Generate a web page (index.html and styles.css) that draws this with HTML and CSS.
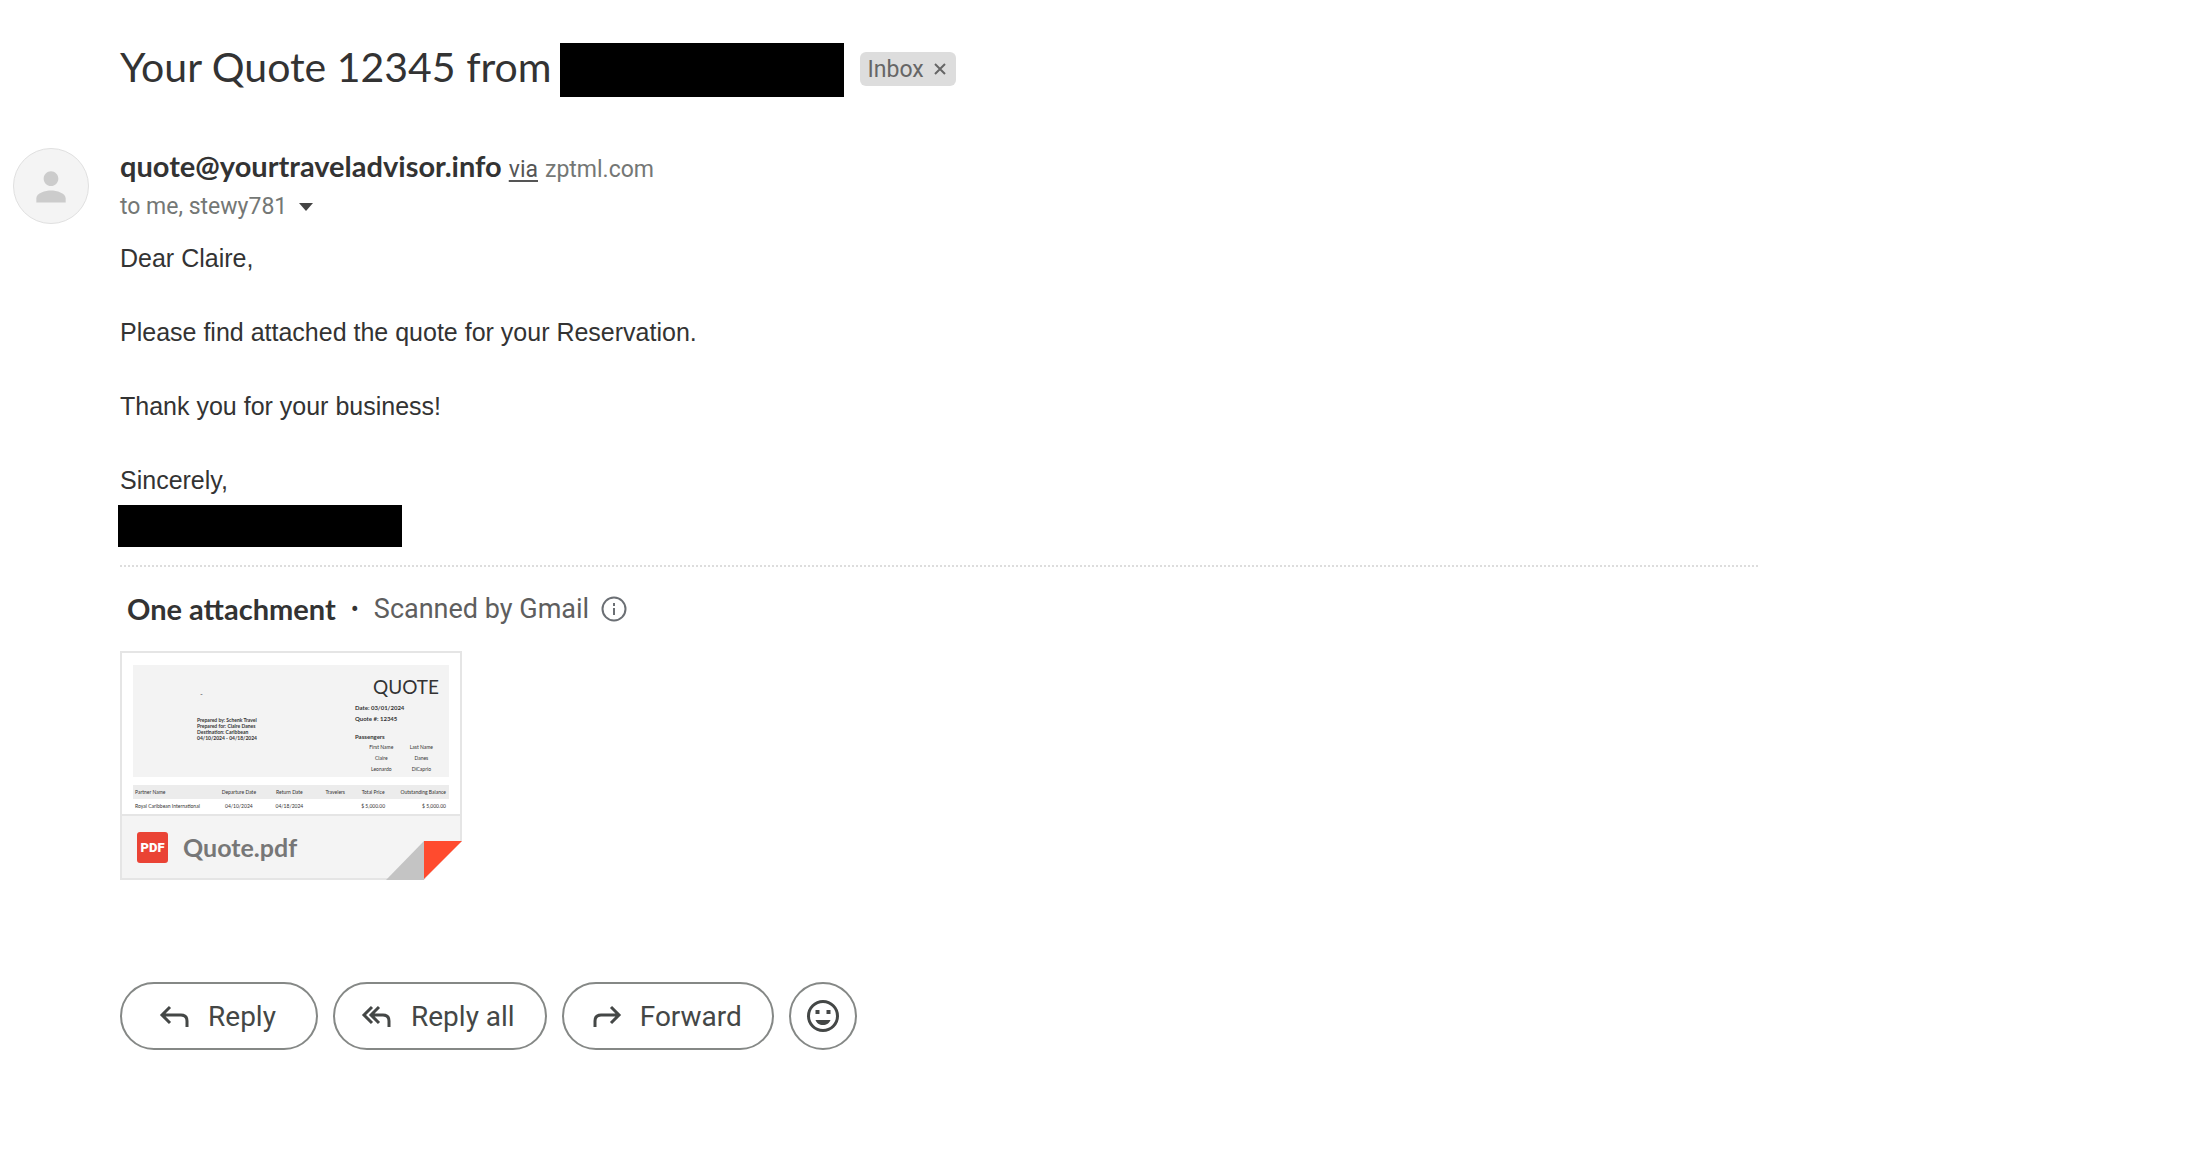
FILE: index.html
```html
<!DOCTYPE html>
<html lang="en">

<head>
    <meta charset="UTF-8">
    <meta name="viewport" content="width=device-width, initial-scale=1.0">
    <title>Your Quote 12345</title>
    <link rel="stylesheet" href="styles.css">
</head>

<body>
    <header class="subject">
        <h1>Your Quote 12345 from</h1>
        <span class="redacted redacted-title"></span>
        <span class="label">Inbox
            <button class="label-remove" aria-label="Remove label">
                <svg width="12" height="12" viewBox="0 0 12 12"><path d="M1 1l10 10M11 1L1 11" /></svg>
            </button>
        </span>
    </header>

    <main class="message">
        <div class="avatar">
            <svg width="44" height="44" viewBox="0 0 24 24"><path d="M12 12c2.200 0 4-1.800 4-4s-1.800-4-4-4-4 1.800-4 4 1.800 4 4 4zm0 2.500c-3 0-8 1.400-8 4.200V21h16v-2.300c0-2.800-5-4.200-8-4.200z" /></svg>
        </div>
        <div class="content">
            <div class="sender">
                <strong>quote@yourtraveladvisor.info</strong>
                <a href="#">via</a>
                <span>zptml.com</span>
            </div>
            <div class="recipients">
                <span>to me, stewy781</span>
                <button class="details" aria-label="Show details"></button>
            </div>

            <div class="body">
                <p>Dear Claire,</p>
                <p>Please find attached the quote for your Reservation.</p>
                <p>Thank you for your business!</p>
                <p>Sincerely,</p>
                <span class="redacted redacted-name"></span>
            </div>

            <section class="attachments">
                <div class="attachments-head">
                    <strong>One attachment</strong>
                    <span class="dot">•</span>
                    <span>Scanned by Gmail</span>
                    <svg width="26" height="26" viewBox="0 0 26 26"><circle cx="13" cy="13" r="11.500" /><path d="M13 12v7M13 7v3" /></svg>
                </div>

                <a class="card" href="#">
                    <div class="preview">
                        <div class="doc-head">
                            <div class="prepared">
                                <i>–</i>
                                <b>Prepared by: Schenk Travel</b>
                                <b>Prepared for: Claire Danes</b>
                                <b>Destination: Caribbean</b>
                                <b>04/10/2024 - 04/18/2024</b>
                            </div>
                            <div class="quote-info">
                                <h2>QUOTE</h2>
                                <b>Date: 03/01/2024</b>
                                <b>Quote #: 12345</b>
                                <b class="passengers-title">Passengers</b>
                                <table class="passengers">
                                    <tr><th>First Name</th><th>Last Name</th></tr>
                                    <tr><td>Claire</td><td>Danes</td></tr>
                                    <tr><td>Leonardo</td><td>DiCaprio</td></tr>
                                </table>
                            </div>
                        </div>
                        <table class="items">
                            <colgroup>
                                <col class="col-partner">
                                <col class="col-departure">
                                <col class="col-return">
                                <col class="col-small">
                                <col class="col-small">
                                <col>
                            </colgroup>
                            <tr>
                                <th>Partner Name</th>
                                <th>Departure Date</th>
                                <th>Return Date</th>
                                <th>Travelers</th>
                                <th>Total Price</th>
                                <th>Outstanding Balance</th>
                            </tr>
                            <tr>
                                <td>Royal Caribbean International</td>
                                <td>04/10/2024</td>
                                <td>04/18/2024</td>
                                <td></td>
                                <td>$ 5,000.00</td>
                                <td>$ 5,000.00</td>
                            </tr>
                        </table>
                    </div>
                    <div class="card-foot">
                        <span class="pdf">PDF</span>
                        <span>Quote.pdf</span>
                    </div>
                    <svg class="fold" width="76" height="39" viewBox="0 0 76 39">
                        <path fill="#fff" d="M76 0v39H38z" />
                        <path fill="#c4c4c4" d="M38 0v39H0z" />
                        <path fill="#ff4b2e" d="M38 0h38L38 38z" />
                    </svg>
                </a>
            </section>

            <div class="actions">
                <button>
                    <svg width="36" height="28" viewBox="0 0 36 28"><path d="M13 5l-8 8 8 8M5 13h19q6 0 6 6v6" /></svg>
                    Reply
                </button>
                <button>
                    <svg width="36" height="28" viewBox="0 0 36 28"><path d="M12 5l-8 8 8 8M19 5l-8 8 8 8M11 13h12q6 0 6 6v6" /></svg>
                    Reply all
                </button>
                <button>
                    <svg width="36" height="28" viewBox="0 0 36 28"><path d="M22 5l8 8-8 8M30 13H12q-6 0-6 6v6" /></svg>
                    Forward
                </button>
                <button class="emoji" aria-label="Add reaction">
                    <svg width="34" height="34" viewBox="0 0 34 34">
                        <circle cx="17" cy="17" r="14.500" />
                        <path class="solid" d="M9.500 11h4v4h-4zM20.500 11h4v4h-4zM9.500 21h15c-1 3-4 5-7.500 5s-6.500-2-7.500-5z" />
                    </svg>
                </button>
            </div>
        </div>
    </main>
</body>

</html>
```
FILE: styles.css
```css
* {
    box-sizing: border-box;
}

body {
    margin: 0;
    padding: 43px 13px;
    background-color: #fff;
    color: #333;
    font-family: Roboto, Arial, sans-serif;
    font-size: 23px;
}

button {
    font-family: inherit;
    background: none;
    border: none;
    padding: 0;
    cursor: pointer;
}

svg {
    flex: none;
}

.subject {
    display: flex;
    align-items: center;
    padding-left: 107px;
    margin-bottom: 51px;
}

.subject h1 {
    margin: 0 8px 0 0;
    padding-bottom: 6px;
    font-family: Lato, sans-serif;
    font-size: 41px;
    font-weight: 400;
    line-height: 48px;
}

.redacted {
    display: block;
    background-color: #000;
    width: 284px;
}

.redacted-title {
    height: 54px;
}

.label {
    display: flex;
    align-items: center;
    gap: 10px;
    height: 34px;
    margin: 0 0 2px 16px;
    padding: 0 10px 0 8px;
    border-radius: 6px;
    background-color: #ddd;
    color: #666;
}

.label-remove {
    display: flex;
}

.label-remove path {
    stroke: #666;
    stroke-width: 2;
}

.message {
    display: flex;
    gap: 31px;
}

.avatar {
    display: flex;
    flex: none;
    align-items: center;
    justify-content: center;
    width: 76px;
    height: 76px;
    border: 1px solid #e0e0e0;
    border-radius: 50%;
    background-color: #f4f4f4;
    fill: #ccc;
}

.content {
    flex: 1;
}

.sender {
    display: flex;
    align-items: baseline;
    gap: 7px;
    line-height: 36px;
    color: #747775;
}

.sender strong {
    font-family: Lato, sans-serif;
    font-size: 29px;
    color: #333;
}

.sender a {
    color: #555;
    text-underline-offset: 3px;
}

.recipients {
    display: flex;
    align-items: center;
    gap: 12px;
    line-height: 38px;
    color: #747775;
}

.details {
    border: 7px solid transparent;
    border-top: 8px solid #444;
    border-bottom: 0;
}

.body {
    padding-top: 14px;
    font-family: "Liberation Sans", Arial, sans-serif;
    font-size: 25px;
    line-height: 37px;
    color: #333;
}

.body p {
    margin: 0 0 37px;
}

.body p:nth-last-of-type(1) {
    margin-bottom: 6px;
}

.redacted-name {
    height: 42px;
    margin-left: -2px;
}

.attachments {
    width: 79%;
    margin-top: 18px;
    border-top: 2px dotted #ddd;
}

.attachments-head {
    display: flex;
    align-items: center;
    padding: 24px 7px;
    font-size: 27px;
    line-height: 36px;
    color: #5e5e5e;
}

.attachments-head strong {
    font-family: Lato, sans-serif;
    font-size: 29px;
    color: #333;
}

.attachments-head .dot {
    margin: 0 15px;
    font-size: 24px;
    color: #333;
}

.attachments-head svg {
    margin-left: 12px;
    fill: none;
    stroke: #6b6f74;
    stroke-width: 2;
}

.card {
    display: block;
    position: relative;
    width: 342px;
    border: 2px solid #e5e5e5;
    color: #777;
    text-decoration: none;
}

.preview {
    padding: 12px 11px 0;
    font-family: Lato, sans-serif;
    font-size: 5px;
    line-height: 6px;
    color: #333;
}

.doc-head {
    display: flex;
    justify-content: space-between;
    height: 112px;
    padding: 11px 10px 0 64px;
    background-color: #f3f3f3;
}

.prepared b,
.prepared i,
.quote-info b {
    display: block;
}

.prepared i {
    padding: 15px 0 20px 3px;
}

.quote-info {
    width: 84px;
}

.quote-info h2 {
    margin: 0 0 4px;
    font-size: 19px;
    font-weight: 400;
    line-height: 22px;
    text-align: right;
}

.quote-info b {
    font-size: 6px;
    line-height: 11px;
}

.quote-info .passengers-title {
    margin-top: 7px;
}

.preview table {
    width: 100%;
    border-collapse: collapse;
}

.preview th,
.preview td {
    padding: 0;
    font-weight: 400;
    text-align: center;
}

.preview .passengers {
    width: 80px;
    margin-left: 6px;
}

.passengers td,
.passengers th {
    line-height: 11px;
}

.preview .items {
    margin-top: 8px;
    table-layout: fixed;
}

.col-partner {
    width: 26%;
}

.col-departure {
    width: 15%;
}

.col-return {
    width: 17%;
}

.col-small {
    width: 12%;
}

.items th {
    line-height: 14px;
    background-color: #ececec;
}

.items td {
    line-height: 15px;
}

.items th:first-child,
.items td:first-child {
    padding-left: 2px;
    text-align: left;
}

.items th:last-child,
.items td:last-child {
    padding-right: 3px;
    text-align: right;
}

.card-foot {
    display: flex;
    align-items: center;
    gap: 15px;
    height: 64px;
    padding: 0 15px;
    border-top: 2px solid #e5e5e5;
    background-color: #f4f4f4;
    font-family: Lato, sans-serif;
    font-size: 25px;
    font-weight: 700;
}

.pdf {
    width: 31px;
    border-radius: 3px;
    background-color: #ea4335;
    color: #fff;
    font-family: Roboto, sans-serif;
    font-size: 13px;
    font-weight: 900;
    line-height: 31px;
    text-align: center;
}

.fold {
    position: absolute;
    right: -2px;
    bottom: -2px;
}

.actions {
    display: flex;
    gap: 15px;
    margin-top: 102px;
}

.actions button {
    display: flex;
    align-items: center;
    justify-content: center;
    gap: 15px;
    min-width: 198px;
    height: 68px;
    padding: 0 30px 0 25px;
    border: 2px solid #858886;
    border-radius: 34px;
    color: #444746;
    font-size: 28px;
}

.actions svg {
    fill: none;
    stroke: #444746;
    stroke-width: 3;
}

.actions .solid {
    fill: #444746;
    stroke: none;
}

.actions .emoji {
    min-width: 0;
    width: 68px;
    padding: 0;
}
```
